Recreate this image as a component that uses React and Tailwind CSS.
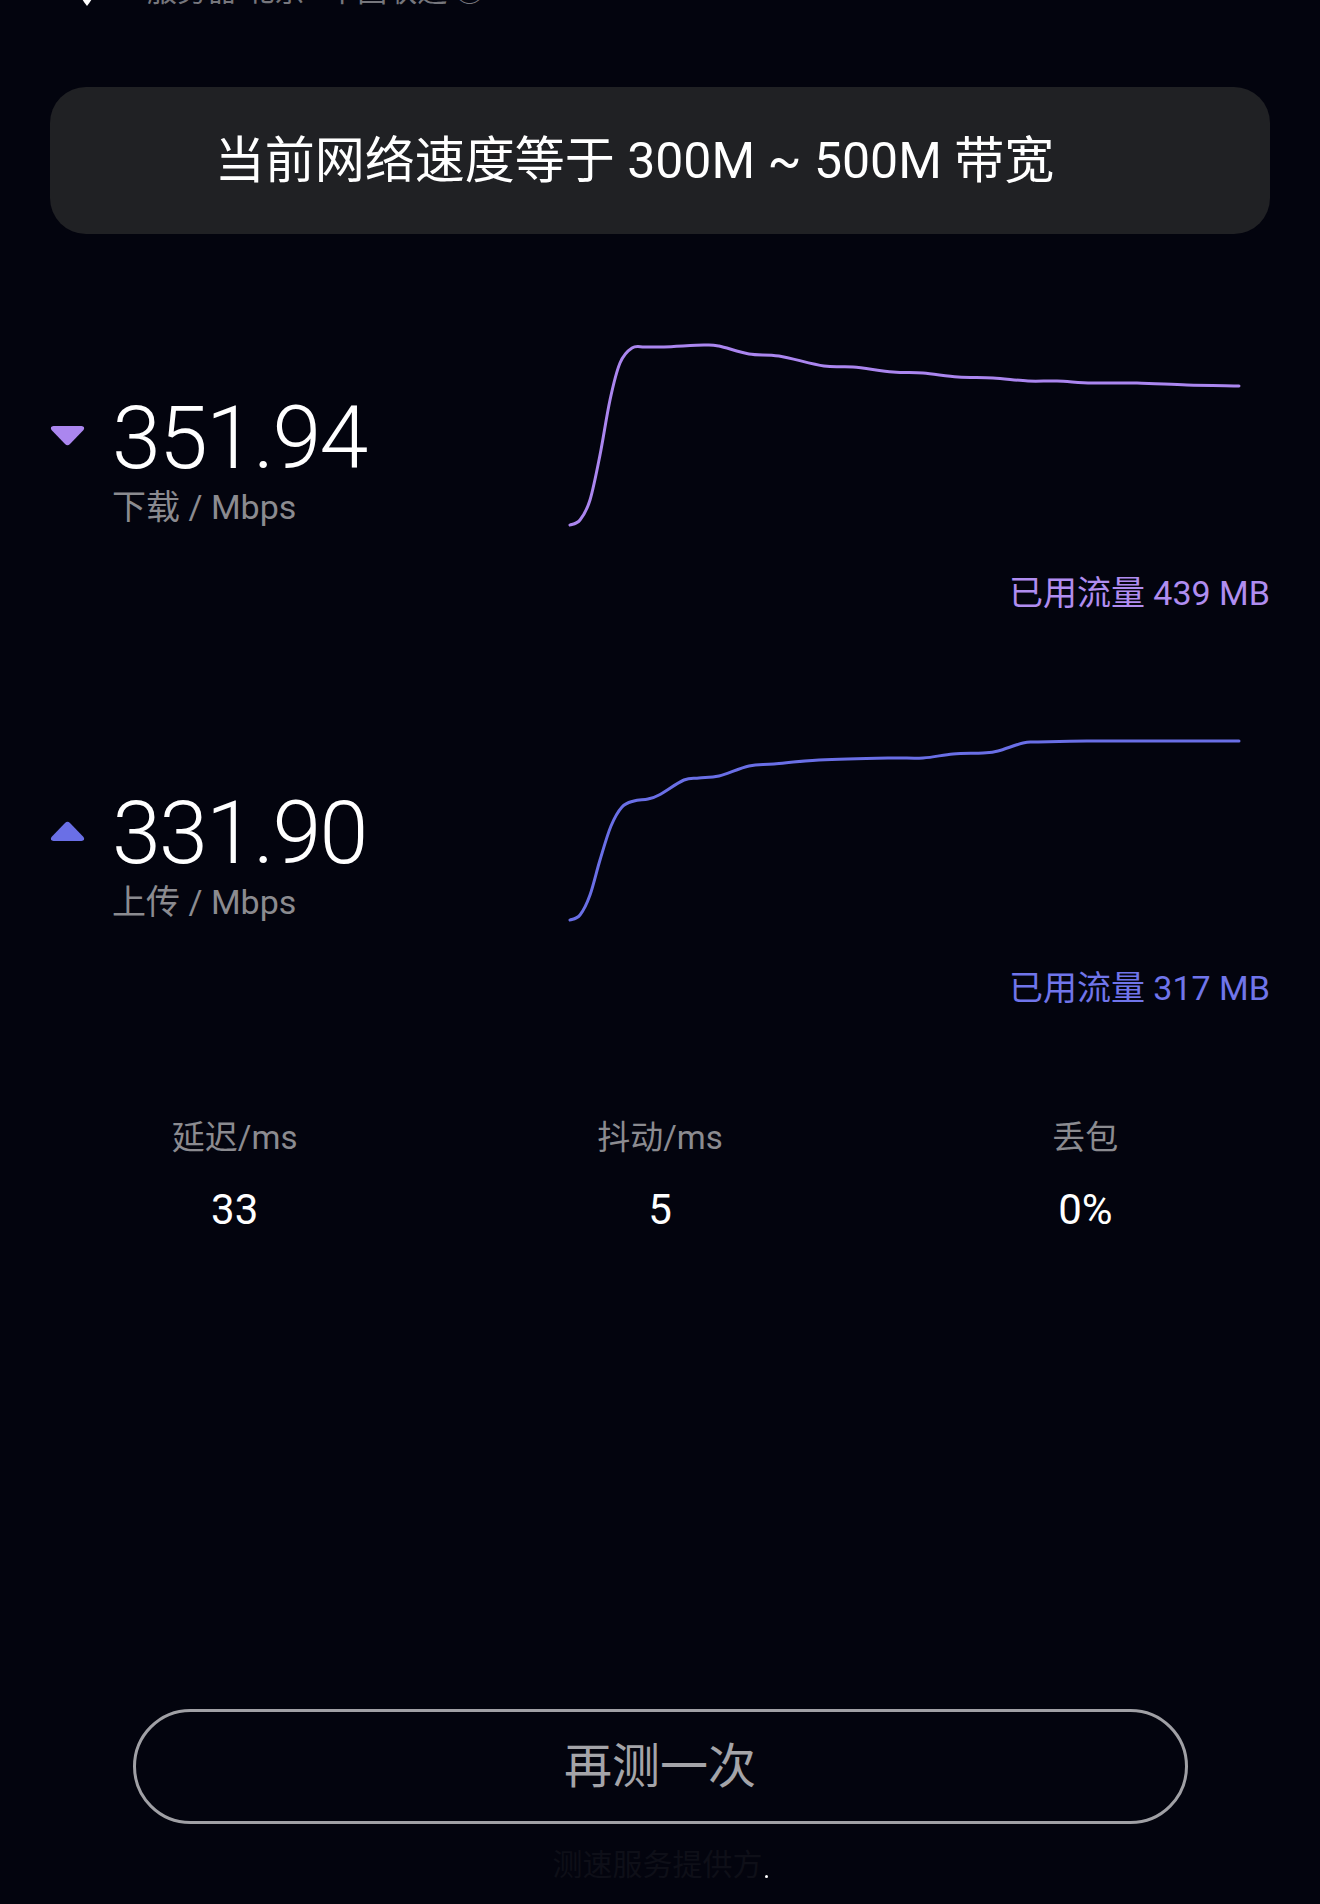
import React from 'react'

// Catmull-Rom -> cubic bezier so the traces come out smooth
const smoothPath = (pts) => {
  let d = `M ${pts[0][0]} ${pts[0][1]}`
  for (let i = 0; i < pts.length - 1; i++) {
    const p0 = pts[i - 1] || pts[i]
    const p1 = pts[i]
    const p2 = pts[i + 1]
    const p3 = pts[i + 2] || p2
    const c1x = p1[0] + (p2[0] - p0[0]) / 6
    const c1y = p1[1] + (p2[1] - p0[1]) / 6
    const c2x = p2[0] - (p3[0] - p1[0]) / 6
    const c2y = p2[1] - (p3[1] - p1[1]) / 6
    d += ` C ${c1x.toFixed(1)} ${c1y.toFixed(1)} ${c2x.toFixed(1)} ${c2y.toFixed(1)} ${p2[0]} ${p2[1]}`
  }
  return d
}

const downloadPts = [
  [570, 525], [580, 520], [590, 500], [600, 455], [610, 400], [620, 363], [632, 348],
  [645, 347], [664, 347], [704, 345], [719, 346], [749, 354], [779, 356], [824, 366],
  [853, 367], [893, 372], [923, 373], [958, 377], [993, 378], [1028, 381], [1057, 381],
  [1092, 383], [1137, 383], [1187, 385], [1239, 386],
]

const uploadPts = [
  [570, 920], [580, 915], [590, 895], [600, 860], [611, 826], [622, 807], [634, 801],
  [648, 799], [659, 795], [684, 780], [699, 778], [719, 776], [749, 766], [774, 764],
  [819, 760], [888, 758], [923, 758], [953, 754], [983, 753], [998, 751], [1023, 743],
  [1038, 742], [1087, 741], [1137, 741], [1239, 741],
]

const SpeedRow = ({ value, label, up, color, labelColor, pts, viewY, used }) => (
  <>
    <div className="flex px-[49px]">
      <div className="w-[511px] pt-[64px]">
        <div className="flex items-center gap-[26px]">
          <svg width="37" height="22" viewBox="0 0 37 22" className="-mt-[4px]">
            {up ? (
              <path d="M16 3 Q18.5 0.5 21 3 L34.5 17 Q36.5 20.5 32.5 21 L4.5 21 Q0.5 20.5 2.5 17 Z" fill={color} />
            ) : (
              <path d="M16 19 Q18.5 21.5 21 19 L34.5 5 Q36.5 1.5 32.5 1 L4.5 1 Q0.5 1.5 2.5 5 Z" fill={color} />
            )}
          </svg>
          <span className="text-[88px] leading-none font-light text-white tracking-[-0.02em]">{value}</span>
        </div>
        <div className="mt-[8px] pl-[63px] text-[34px] leading-none text-[#8b8b90]">{label}</div>
      </div>
      <svg width="690" height="210" viewBox={`560 ${viewY} 690 210`}>
        <path d={smoothPath(pts)} fill="none" stroke={color} strokeWidth="3" strokeLinecap="round" strokeLinejoin="round" />
      </svg>
    </div>
    <div className="mt-[36px] pr-[50px] text-right text-[34px] leading-none" style={{ color: labelColor }}>
      已用流量 {used} MB
    </div>
  </>
)

const Stat = ({ label, value }) => (
  <div className="flex flex-col items-center">
    <div className="text-[33px] leading-none text-[#8b8b90]">{label}</div>
    <div className="mt-[35px] text-[42px] leading-none text-white">{value}</div>
  </div>
)

export default function App() {
  return (
    <div
      className="min-h-[1904px] w-full overflow-hidden bg-[#03040e] flex flex-col"
      style={{ fontFamily: 'Roboto, "Noto Sans CJK SC", sans-serif' }}
    >
      {/* server line, mostly scrolled off the top */}
      <div className="-mt-[30px] h-[36px] flex items-end pl-[77px]">
        <svg width="20" height="30" viewBox="0 0 20 30">
          <path d="M10 30 C4 22 0 16 0 10 A10 10 0 0 1 20 10 C20 16 16 22 10 30 Z" fill="#ffffff" />
        </svg>
        <span className="ml-[50px] text-[30px] leading-none text-[#76767c] whitespace-nowrap">
          服务器 北京 · 中国联通 ⓘ
        </span>
      </div>

      <div className="mt-[81px] mx-[50px] h-[147px] rounded-[36px] bg-[#202124] flex items-center justify-center pr-[51px]">
        <span className="text-[50px] leading-none text-white">当前网络速度等于 300M ~ 500M 带宽</span>
      </div>

      <div className="mt-[96px]">
        <SpeedRow
          value="351.94"
          label="下载 / Mbps"
          up={false}
          color="#ab86ef"
          labelColor="#b08df0"
          pts={downloadPts}
          viewY={330}
          used="439"
        />
      </div>

      <div className="mt-[115px]">
        <SpeedRow
          value="331.90"
          label="上传 / Mbps"
          up
          color="#6a6fe6"
          labelColor="#7075ea"
          pts={uploadPts}
          viewY={725}
          used="317"
        />
      </div>

      <div className="mt-[116px] grid grid-cols-3 px-[22px]">
        <Stat label="延迟/ms" value="33" />
        <Stat label="抖动/ms" value="5" />
        <Stat label="丢包" value="0%" />
      </div>

      <button className="mt-[478px] mx-auto w-[1055px] h-[115px] rounded-full border-[3px] border-[#a0a0a5] flex items-center justify-center">
        <span className="text-[48px] leading-none text-[#a4a4a9]">再测一次</span>
      </button>

      <div className="mt-[26px] flex justify-center items-end gap-[2px]">
        <span className="text-[30px] leading-none text-[#0e0f18]">测速服务提供方</span>
        <span className="w-[3px] h-[3px] rounded-full bg-white mb-[2px]" />
      </div>
    </div>
  )
}
